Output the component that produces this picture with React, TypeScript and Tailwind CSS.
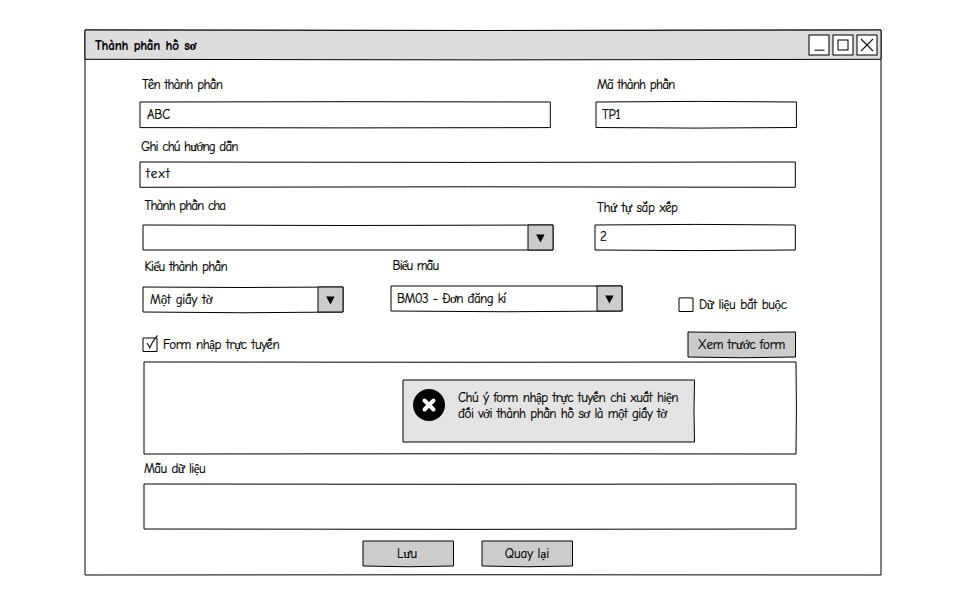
import type { ReactNode } from 'react';

type Bow = [number, number, number, number];

/** Hand-drawn outline: each side bends outward by the given amount (top, right, bottom, left). */
function Sketch({ w, h, fill = '#fff', bow = [1, 0, 1, 0] }: { w: number; h: number; fill?: string; bow?: Bow }) {
  const [t, r, b, l] = bow;
  const d = `M0 0Q${w / 2} ${-t} ${w} 0Q${w + r} ${h / 2} ${w} ${h}Q${w / 2} ${h + b} 0 ${h}Q${-l} ${h / 2} 0 0Z`;
  return (
    <svg className="pointer-events-none absolute top-0 left-0 overflow-visible" width={w} height={h} aria-hidden="true">
      <path d={d} fill={fill} stroke="#000" strokeWidth="1" strokeLinejoin="round" />
    </svg>
  );
}

function Text({ children, className = '' }: { children: ReactNode; className?: string }) {
  return <span className={`relative block leading-[18px] whitespace-nowrap ${className}`}>{children}</span>;
}

function Field({ w, h, className, bow, children }: { w: number; h: number; className: string; bow?: Bow; children?: ReactNode }) {
  return (
    <div className={`relative shrink-0 ${className}`}>
      <Sketch w={w} h={h} bow={bow} />
      {children}
    </div>
  );
}

function Select({ w, h, className, bow, children }: { w: number; h: number; className: string; bow?: Bow; children?: ReactNode }) {
  return (
    <div className={`relative flex shrink-0 justify-between ${className}`}>
      <Sketch w={w} h={h} bow={bow} />
      <div>{children}</div>
      <div className="relative h-[25px] w-[25px]">
        <Sketch w={25} h={h} fill="#ccc" bow={[0, 0, 0, 0]} />
        <svg className="relative" width="25" height="25" aria-hidden="true">
          <path d="M8.2 9.5H16.6L12.4 17.5Z" fill="#000" />
        </svg>
      </div>
    </div>
  );
}

function Button({ w, h, className, bow, children }: { w: number; h: number; className: string; bow: Bow; children: ReactNode }) {
  return (
    <button className={`relative flex shrink-0 items-center justify-center ${className}`}>
      <Sketch w={w} h={h} fill="#ccc" bow={bow} />
      {children}
    </button>
  );
}

function WindowIcon({ children }: { children: ReactNode }) {
  return (
    <svg width="21" height="21" className="overflow-visible" aria-hidden="true" fill="none" stroke="#111" strokeWidth="1.1">
      <rect x="0" y="0" width="20" height="20" fill="#fff" />
      {children}
    </svg>
  );
}

export default function App() {
  return (
    <div className="h-[600px] w-[960px] overflow-hidden bg-white pt-[30px] pl-[85px] font-['Comic_Sans_MS','Comic_Neue',cursive] text-[13px] [word-spacing:1px] text-black [-webkit-text-stroke:0.2px_#000]">
      <div className="relative h-[545px] w-[796px]">
        <Sketch w={796} h={545} bow={[-1, 0, -0.5, 0]} />

        <header className="relative flex h-[29px] justify-between">
          <Sketch w={796} h={29.3} fill="#ddd" bow={[-1, 0, 1.2, 0]} />
          <Text className="mt-[7px] ml-[10px] font-bold tracking-[-0.2px]">Thành phần hồ sơ</Text>
          <div className="relative mt-[5px] mr-[3px] flex gap-[3px]">
            <WindowIcon><path d="M5.5 15.2H15.5" /></WindowIcon>
            <WindowIcon><rect x="5" y="5" width="10" height="10" /></WindowIcon>
            <WindowIcon><path d="M4 4L16 16M16 4L4 16" /></WindowIcon>
          </div>
        </header>

        <main className="relative pt-[17px] pl-[55px]">
          <div className="flex h-[62px]">
            <div className="w-[456px]">
              <Text className="ml-[2px] tracking-[-0.71px]">Tên thành phần</Text>
              <Field w={410.3} h={25.6} className="mt-[7.5px] h-[26px] w-[410px]" bow={[0.6, 0, 0.6, 0]}>
                <Text className="pt-[4px] pl-[7px] tracking-[-0.2px]">ABC</Text>
              </Field>
            </div>
            <div>
              <Text className="ml-[1px] tracking-[-0.78px]">Mã thành phần</Text>
              <Field w={200.4} h={25.5} className="mt-[7.5px] h-[26px] w-[200px]" bow={[1.2, 0, 1.2, 0]}>
                <Text className="pt-[4px] pl-[6px] tracking-[-0.3px]">TP1</Text>
              </Field>
            </div>
          </div>

          <div className="h-[59px]">
            <Text className="ml-[1px] tracking-[-0.84px]">Ghi chú hướng dẫn</Text>
            <Field w={655.3} h={25.3} className="mt-[6px] h-[25px] w-[655px]" bow={[-0.8, 0, -1, 0]}>
              <Text className="pt-[3px] pl-[6px] tracking-[1.3px]">text</Text>
            </Field>
          </div>

          <div className="flex h-[60px]">
            <div className="w-[455px] pl-[3px]">
              <Text className="ml-[1.5px] tracking-[-0.88px]">Thành phần cha</Text>
              <Select w={410} h={25} className="mt-[10px] h-[25px] w-[410px]" bow={[-1, 0, 0, 0]} />
            </div>
            <div className="pt-[2px]">
              <Text className="ml-[2px] tracking-[-0.38px]">Thứ tự sắp xếp</Text>
              <Field w={200.3} h={25} className="mt-[8px] h-[25px] w-[200px]" bow={[1.2, 0, 1.2, 0]}>
                <Text className="pt-[3px] pl-[5px]">2</Text>
              </Field>
            </div>
          </div>

          <div className="flex h-[75px] pl-[3px]">
            <div className="w-[248px] pt-px">
              <Text className="ml-[1.5px] tracking-[-0.67px]">Kiểu thành phần</Text>
              <Select w={200} h={25} className="mt-[11px] h-[25px] w-[200px]" bow={[-1, 0, 1.5, 0]}>
                <Text className="pt-[4px] pl-[7px] tracking-[-0.2px]">Một giấy tờ</Text>
              </Select>
            </div>
            <div className="w-[288px]">
              <Text className="ml-[1.5px] tracking-[-0.9px]">Biểu mẫu</Text>
              <Select w={231} h={25} className="mt-[11px] h-[25px] w-[231px]" bow={[0, 0, 1.5, 0]}>
                <Text className="pt-[4px] pl-[6px] tracking-[-0.62px]">BM03 - Đơn đăng kí</Text>
              </Select>
            </div>
            <div className="flex pt-[39px]">
              <Field w={14} h={13.5} className="mt-[2px] h-[14px] w-[14px]" bow={[0.4, 0, 0, 0]} />
              <Text className="ml-[6px] tracking-[-0.35px]">Dữ liệu bắt buộc</Text>
            </div>
          </div>

          <div className="flex h-[29px] pl-[3px]">
            <div className="flex w-[545px] pt-[4px]">
              <div className="relative mt-[2px] h-[14px] w-[14px]">
                <Sketch w={14} h={13.5} bow={[0, 0, 0, 0]} />
                <svg className="relative block overflow-visible" width="14" height="14" fill="none" stroke="#222" strokeWidth="1.2" aria-hidden="true">
                  <path d="M4 5.2Q6 7 6.8 9.7Q9.5 3 14.5 -2.5" />
                </svg>
              </div>
              <Text className="ml-[6px] tracking-[-0.4px]">Form nhập trực tuyến</Text>
            </div>
            <Button w={107.5} h={25} className="h-[26px] w-[107px]" bow={[-1, 0, 1.5, 0]}>
              <Text className="tracking-[-0.2px]">Xem trước form</Text>
            </Button>
          </div>

          <div className="h-[99px] pt-[0.5px] pl-[3.5px]">
            <div className="relative h-[92px] w-[652px] pt-[18.5px] pl-[259.5px]">
              <Sketch w={652} h={92} bow={[-0.5, 0.8, -0.5, 0]} />
              <div className="relative flex h-[62px] w-[292px]">
                <Sketch w={291.5} h={62} fill="#e4e4e4" bow={[0, -1, 0, 0]} />
                <svg className="relative mt-[9px] ml-[10px] shrink-0" width="32" height="32" aria-hidden="true">
                  <circle cx="16" cy="16" r="16" fill="#000" />
                  <path d="M11.5 11.5L20.5 20.5M20.5 11.5L11.5 20.5" stroke="#fff" strokeWidth="4" strokeLinecap="round" />
                </svg>
                <div className="relative mt-[9px] ml-[13px]">
                  <Text className="h-[16px] tracking-[-0.45px]">Chú ý form nhập trực tuyến chỉ xuất hiện</Text>
                  <Text className="tracking-[-0.53px]">đối với thành phần hồ sơ là một giấy tờ</Text>
                </div>
              </div>
            </div>
          </div>

          <div className="h-[81px] pl-[3.5px]">
            <Text className="ml-[0.5px] tracking-[-0.55px]">Mẫu dữ liệu</Text>
            <Field w={652} h={45} className="mt-[5.5px] h-[45px] w-[652px]" bow={[-0.6, 0, 0.7, 0]} />
          </div>

          <div className="flex gap-[28px] pl-[222.5px]">
            <Button w={90.5} h={25} className="h-[26px] w-[91px]" bow={[0, 0, 1.5, 0]}>
              <Text className="mr-[2px]">Lưu</Text>
            </Button>
            <Button w={90.5} h={25} className="h-[26px] w-[91px]" bow={[0, 0, 1.5, 0]}>
              <Text className="tracking-[0.05px]">Quay lại</Text>
            </Button>
          </div>
        </main>
      </div>
    </div>
  );
}
